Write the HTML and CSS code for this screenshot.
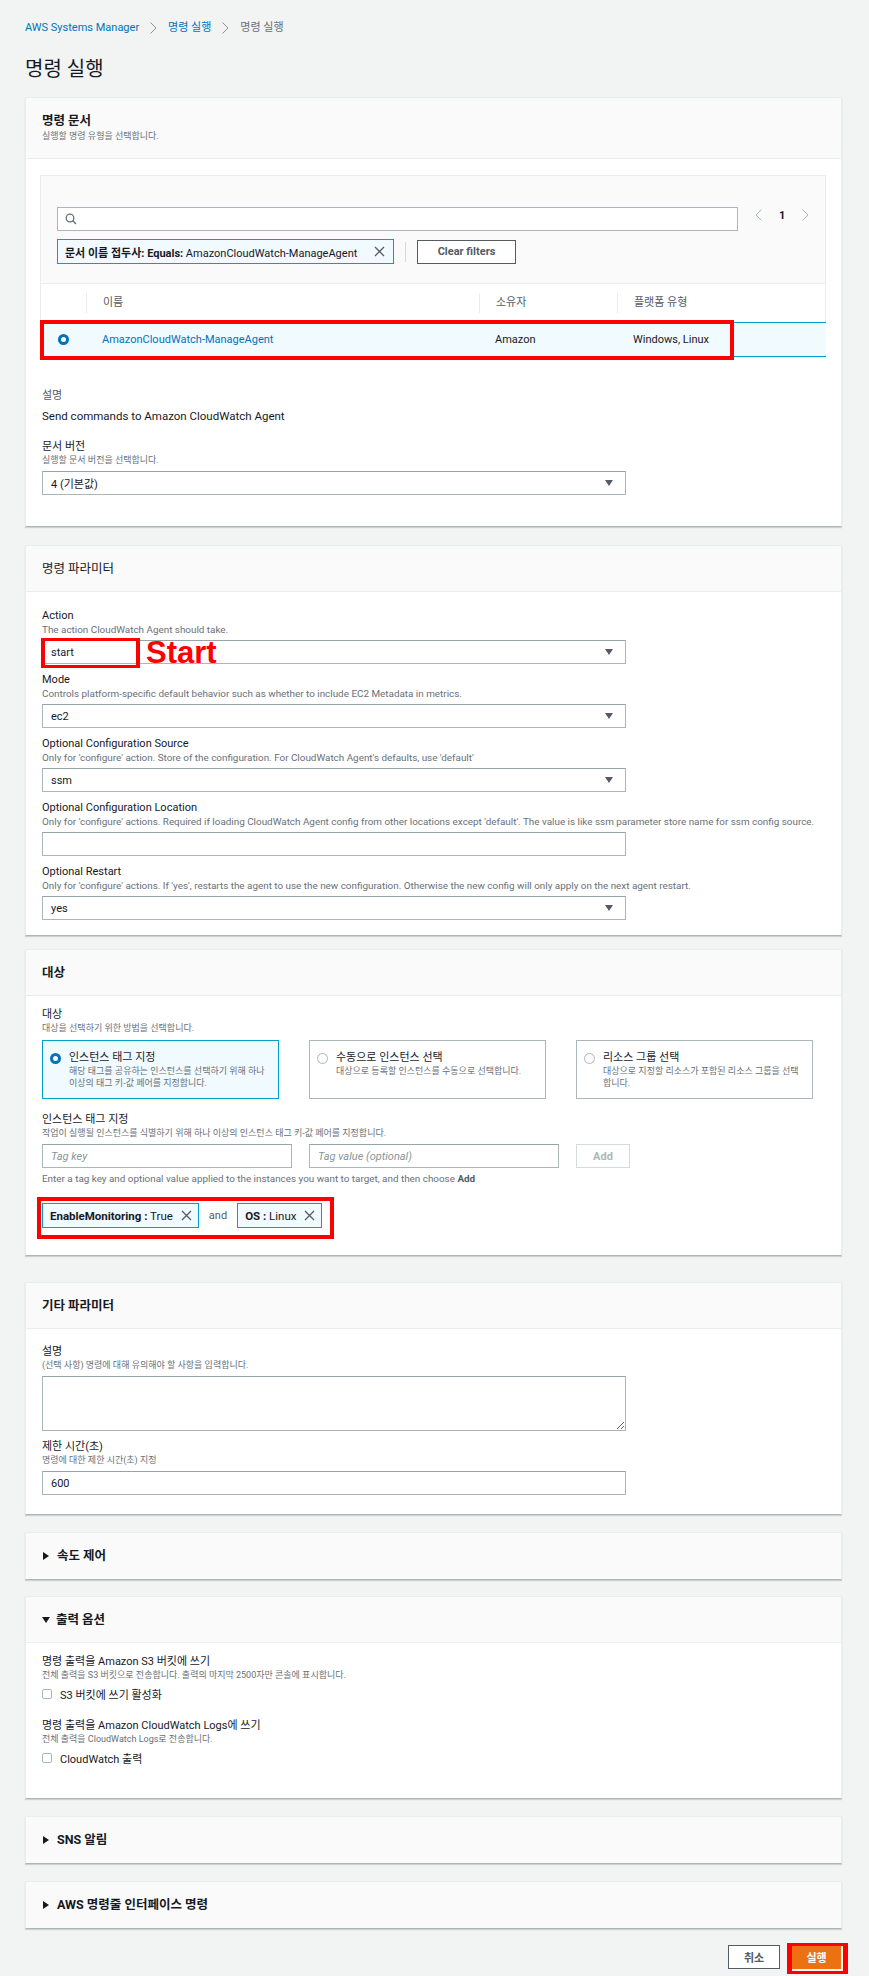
FILE: index.html
```html
<!DOCTYPE html>
<html lang="ko">
<head>
<meta charset="utf-8">
<title>명령 실행</title>
<link rel="stylesheet" href="styles.css">
</head>
<body>
<div class="page">
  <nav class="crumbs">
    <span class="crumb-link">AWS Systems Manager</span>
    <svg class="crumb-sep" viewBox="0 0 7 12"><path d="M0.5 0.5 L6 6 L0.5 11.5"/></svg>
    <span class="crumb-link">명령 실행</span>
    <svg class="crumb-sep" viewBox="0 0 7 12"><path d="M0.5 0.5 L6 6 L0.5 11.5"/></svg>
    <span class="crumb-current">명령 실행</span>
  </nav>
  <h1 class="page-title">명령 실행</h1>

  <div class="panels">
    <section class="panel">
      <header class="panel-head head-desc">
        <h2 class="panel-title">명령 문서</h2>
        <p class="panel-desc">실행할 명령 유형을 선택합니다.</p>
      </header>
      <div class="panel-body body-doc">
        <div class="table">
          <div class="filters">
            <div class="filter-top">
              <div class="search">
                <svg class="search-icon" viewBox="0 0 12 12"><circle cx="5" cy="5" r="3.8"/><path d="M7.8 7.8 L11 11"/></svg>
              </div>
              <div class="pager">
                <svg class="pager-chev" viewBox="0 0 7 12"><path d="M6.5 0.5 L1 6 L6.5 11.5"/></svg>
                <span class="pager-num">1</span>
                <svg class="pager-chev" viewBox="0 0 7 12"><path d="M0.5 0.5 L6 6 L0.5 11.5"/></svg>
              </div>
            </div>
            <div class="filter-bottom">
              <div class="chip">
                <span><b>문서 이름 접두사: Equals:</b> AmazonCloudWatch-ManageAgent</span>
                <svg class="x-icon" viewBox="0 0 11 11"><path d="M1 1 L10 10 M10 1 L1 10"/></svg>
              </div>
              <span class="vsep"></span>
              <span class="btn">Clear filters</span>
            </div>
          </div>
          <div class="thead">
            <div class="th"></div>
            <div class="th sep">이름</div>
            <div class="th sep">소유자</div>
            <div class="th sep">플랫폼 유형</div>
          </div>
          <div class="trow">
            <div class="td td-radio"><span class="radio on"></span></div>
            <div class="td"><span class="link">AmazonCloudWatch-ManageAgent</span></div>
            <div class="td">Amazon</div>
            <div class="td">Windows, Linux</div>
            <span class="mark mark-row"></span>
          </div>
        </div>

        <div class="kv">
          <div class="kv-label">설명</div>
          <div class="kv-value">Send commands to Amazon CloudWatch Agent</div>
        </div>

        <div class="field field-version">
          <div class="label">문서 버전</div>
          <div class="desc">실행할 문서 버전을 선택합니다.</div>
          <div class="control select"><span>4 (기본값)</span><svg class="caret" viewBox="0 0 8 6"><path d="M0 0 H8 L4 6 Z"/></svg></div>
        </div>
      </div>
    </section>

    <section class="panel gap-18">
      <header class="panel-head">
        <h2 class="panel-title light">명령 파라미터</h2>
      </header>
      <div class="panel-body body-params">
        <div class="field">
          <div class="label">Action</div>
          <div class="desc desc-en">The action CloudWatch Agent should take.</div>
          <div class="control select annotated">
            <span>start</span><svg class="caret" viewBox="0 0 8 6"><path d="M0 0 H8 L4 6 Z"/></svg>
            <span class="mark mark-action"></span>
            <span class="note">Start</span>
          </div>
        </div>
        <div class="field">
          <div class="label">Mode</div>
          <div class="desc desc-en">Controls platform-specific default behavior such as whether to include EC2 Metadata in metrics.</div>
          <div class="control select"><span>ec2</span><svg class="caret" viewBox="0 0 8 6"><path d="M0 0 H8 L4 6 Z"/></svg></div>
        </div>
        <div class="field">
          <div class="label">Optional Configuration Source</div>
          <div class="desc desc-en">Only for 'configure' action. Store of the configuration. For CloudWatch Agent's defaults, use 'default'</div>
          <div class="control select"><span>ssm</span><svg class="caret" viewBox="0 0 8 6"><path d="M0 0 H8 L4 6 Z"/></svg></div>
        </div>
        <div class="field">
          <div class="label">Optional Configuration Location</div>
          <div class="desc desc-en">Only for 'configure' actions. Required if loading CloudWatch Agent config from other locations except 'default'. The value is like ssm parameter store name for ssm config source.</div>
          <div class="control input"></div>
        </div>
        <div class="field">
          <div class="label">Optional Restart</div>
          <div class="desc desc-en">Only for 'configure' actions. If 'yes', restarts the agent to use the new configuration. Otherwise the new config will only apply on the next agent restart.</div>
          <div class="control select"><span>yes</span><svg class="caret" viewBox="0 0 8 6"><path d="M0 0 H8 L4 6 Z"/></svg></div>
        </div>
      </div>
    </section>

    <section class="panel gap-13">
      <header class="panel-head">
        <h2 class="panel-title">대상</h2>
      </header>
      <div class="panel-body body-target">
        <div class="label">대상</div>
        <div class="desc">대상을 선택하기 위한 방법을 선택합니다.</div>
        <div class="cards">
          <div class="card on">
            <span class="radio on"></span>
            <div class="card-text">
              <div class="card-title">인스턴스 태그 지정</div>
              <div class="card-desc">해당 태그를 공유하는 인스턴스를 선택하기 위해 하나<br>이상의 태그 키-값 페어를 지정합니다.</div>
            </div>
          </div>
          <div class="card">
            <span class="radio"></span>
            <div class="card-text">
              <div class="card-title">수동으로 인스턴스 선택</div>
              <div class="card-desc">대상으로 등록할 인스턴스를 수동으로 선택합니다.</div>
            </div>
          </div>
          <div class="card">
            <span class="radio"></span>
            <div class="card-text">
              <div class="card-title">리소스 그룹 선택</div>
              <div class="card-desc">대상으로 지정할 리소스가 포함된 리소스 그룹을 선택<br>합니다.</div>
            </div>
          </div>
        </div>

        <div class="label tag-label">인스턴스 태그 지정</div>
        <div class="desc">작업이 실행될 인스턴스를 식별하기 위해 하나 이상의 인스턴스 태그 키-값 페어를 지정합니다.</div>
        <div class="tag-inputs">
          <div class="control input tag-input"><span class="ph">Tag key</span></div>
          <div class="control input tag-input"><span class="ph">Tag value (optional)</span></div>
          <span class="btn btn-disabled">Add</span>
        </div>
        <div class="desc desc-en hint">Enter a tag key and optional value applied to the instances you want to target, and then choose <b>Add</b></div>
        <div class="tokens">
          <div class="token"><span><b>EnableMonitoring :</b> True</span><svg class="x-icon" viewBox="0 0 11 11"><path d="M1 1 L10 10 M10 1 L1 10"/></svg></div>
          <span class="and">and</span>
          <div class="token"><span><b>OS :</b> Linux</span><svg class="x-icon" viewBox="0 0 11 11"><path d="M1 1 L10 10 M10 1 L1 10"/></svg></div>
          <span class="mark mark-tokens"></span>
        </div>
      </div>
    </section>

    <section class="panel gap-27">
      <header class="panel-head">
        <h2 class="panel-title">기타 파라미터</h2>
      </header>
      <div class="panel-body body-other">
        <div class="field">
          <div class="label">설명</div>
          <div class="desc">(선택 사항) 명령에 대해 유의해야 할 사항을 입력합니다.</div>
          <textarea class="control textarea"></textarea>
        </div>
        <div class="field">
          <div class="label">제한 시간(초)</div>
          <div class="desc">명령에 대한 제한 시간(초) 지정</div>
          <div class="control input"><span>600</span></div>
        </div>
      </div>
    </section>

    <section class="panel gap-17">
      <header class="panel-head">
        <h2 class="panel-title"><svg class="tri" viewBox="0 0 6 8"><path d="M0 0 L6 4 L0 8 Z"/></svg>속도 제어</h2>
      </header>
    </section>

    <section class="panel gap-16">
      <header class="panel-head">
        <h2 class="panel-title"><svg class="tri tri-down" viewBox="0 0 8 6"><path d="M0 0 H8 L4 6 Z"/></svg>출력 옵션</h2>
      </header>
      <div class="panel-body body-output">
        <div class="label">명령 출력을 Amazon S3 버킷에 쓰기</div>
        <div class="desc">전체 출력을 S3 버킷으로 전송합니다. 출력의 마지막 2500자만 콘솔에 표시합니다.</div>
        <label class="check"><span class="box"></span>S3 버킷에 쓰기 활성화</label>
        <div class="label group2">명령 출력을 Amazon CloudWatch Logs에 쓰기</div>
        <div class="desc">전체 출력을 CloudWatch Logs로 전송합니다.</div>
        <label class="check"><span class="box"></span>CloudWatch 출력</label>
      </div>
    </section>

    <section class="panel gap-17">
      <header class="panel-head">
        <h2 class="panel-title"><svg class="tri" viewBox="0 0 6 8"><path d="M0 0 L6 4 L0 8 Z"/></svg>SNS 알림</h2>
      </header>
    </section>

    <section class="panel gap-17">
      <header class="panel-head">
        <h2 class="panel-title"><svg class="tri" viewBox="0 0 6 8"><path d="M0 0 L6 4 L0 8 Z"/></svg>AWS 명령줄 인터페이스 명령</h2>
      </header>
    </section>
  </div>

  <div class="actions">
    <span class="btn btn-cancel">취소</span>
    <span class="btn btn-run">실행<span class="mark mark-run"></span></span>
  </div>
</div>
</body>
</html>
```

FILE: styles.css
```css
* { box-sizing: border-box; }
html, body { margin: 0; padding: 0; }
body {
  background: #f2f3f3;
  font-family: Roboto, "Noto Sans CJK KR", sans-serif;
  color: #16191f;
  font-size: 11px;
}
b { font-weight: 700; }

.page { padding: 21px 27px 8px 25px; }

/* breadcrumbs */
.crumbs { display: flex; align-items: center; height: 14px; line-height: 14px; font-size: 11px; }
.crumb-link { color: #0073bb; }
.crumb-current { color: #687078; }
.crumb-sep { width: 7px; height: 12px; margin: 0 11px; fill: none; stroke: #879596; stroke-width: 1; }

.page-title { margin: 21px 0 15px; font-size: 20px; line-height: 26px; font-weight: 400; color: #16191f; }

/* panels */
.panels { display: flex; flex-direction: column; }
.panel {
  background: #fff;
  border: 1px solid #eaeded;
  border-bottom-color: #aab7b8;
  box-shadow: 0 1px 1px 0 rgba(0, 28, 36, 0.15);
}
.gap-18 { margin-top: 18px; }
.gap-13 { margin-top: 13px; }
.gap-27 { margin-top: 26px; }
.gap-17 { margin-top: 17px; }
.gap-16 { margin-top: 16px; }

.panel-head { background: #fafafa; padding: 14px 16px 13px; border-bottom: 1px solid #eaeded; }
.panel > .panel-head:last-child { border-bottom: 0; padding-bottom: 14px; }
.head-desc { padding-bottom: 15px; }
.panel-title { margin: 0; font-size: 12.5px; line-height: 18px; font-weight: 700; display: flex; align-items: center; }
.panel-title.light { font-weight: 400; }
.panel-desc { margin: 0; font-size: 9px; line-height: 13px; color: #687078; }
.tri { width: 6px; height: 8px; fill: #16191f; margin: 0 8px 0 1px; }
.tri-down { width: 8px; height: 6px; margin: 0 6px 0 0; }

.panel-body { padding: 17px 15px 15px 16px; }
.body-doc { padding: 16px 15px 31px 16px; }
.body-target { padding: 12px 15px 27px 16px; }
.body-other { padding: 16px 15px 19px 16px; }
.body-output { padding: 12px 15px 33px 16px; }

/* fields */
.label { font-size: 11px; line-height: 14px; color: #16191f; }
.desc { font-size: 9px; line-height: 13px; color: #687078; white-space: nowrap; }
.desc-en { font-size: 9.9px; }
.field + .field { margin-top: 9px; }
.control {
  margin-top: 4px;
  width: 584px;
  height: 24px;
  border: 1px solid #aab7b8;
  border-top-color: #95a5a6;
  background: #fff;
  display: flex;
  align-items: center;
  padding: 0 12px 0 8px;
  font-size: 11px;
  color: #16191f;
}
.select { justify-content: space-between; }
.caret { width: 8px; height: 6px; fill: #545b64; }
.textarea { display: block; height: 55px; resize: vertical; font-family: inherit; }
.ph { color: #879596; font-style: italic; }

.annotated { position: relative; }
.note {
  position: absolute;
  left: 103px;
  top: -2px;
  font-family: "Liberation Sans", Arial, sans-serif;
  font-weight: 700;
  font-size: 31px;
  line-height: 28px;
  color: #ff0000;
}

/* red annotation boxes */
.mark { position: absolute; border: 4px solid #ff0000; pointer-events: none; }
.mark-action { left: -2px; top: -3px; width: 99px; height: 30px; border-width: 3px 4px; }
.mark-row { left: -1px; top: -3px; width: 694px; height: 40px; }
.mark-tokens { left: -5px; top: -6px; width: 297px; height: 42px; }
.mark-run { left: -6px; top: -3px; width: 61px; height: 31px; border-width: 3px 5px; }

/* table */
.table { margin: 0 0 0 -2px; border: 1px solid #eaeded; }
.filters { background: #fafafa; padding: 31px 14px 19px 16px; border-bottom: 1px solid #eaeded; }
.filter-top { display: flex; align-items: center; }
.search { width: 681px; height: 24px; border: 1px solid #aab7b8; background: #fff; display: flex; align-items: center; padding-left: 7px; }
.search-icon { width: 12px; height: 12px; fill: none; stroke: #687078; stroke-width: 1.3; }
.pager { display: flex; align-items: center; gap: 17px; margin-left: 17px; margin-top: -8px; }
.pager-chev { width: 7px; height: 12px; fill: none; stroke: #aab7b8; stroke-width: 1; }
.pager-num { font-weight: 700; font-size: 11px; }
.filter-bottom { display: flex; align-items: center; margin-top: 8px; }
.chip {
  width: 337px; height: 25px;
  display: flex; align-items: center; justify-content: space-between;
  border: 1px solid #00a1c9; background: #f1faff;
  padding: 0 8px 0 7px; font-size: 11px; white-space: nowrap; overflow: hidden;
}
.x-icon { width: 11px; height: 11px; flex: none; fill: none; stroke: #545b64; stroke-width: 1.3; }
.vsep { width: 1px; height: 20px; background: #d5dbdb; margin: 0 11px; }
.btn {
  display: inline-flex; align-items: center; justify-content: center;
  height: 24px; border: 1px solid #545b64; background: #fff;
  font-weight: 700; font-size: 11px; color: #545b64;
}
.filter-bottom .btn { width: 99px; }

.thead, .trow { display: grid; grid-template-columns: 45px 393px 138px 1fr; }
.thead { height: 38px; background: #fff; align-items: center; }
.th { padding-left: 17px; color: #545b64; font-size: 11px; height: 20px; line-height: 20px; }
.th.sep { border-left: 1px solid #eaeded; padding-left: 16px; }
.trow {
  position: relative; height: 35px; align-items: center;
  background: #f1faff; border-top: 1px solid #00a1c9; border-bottom: 1px solid #00a1c9;
  margin-right: -1px;
}
.td { padding-left: 16px; font-size: 11px; }
.td-radio { padding-left: 0; display: flex; justify-content: center; }
.link { color: #0073bb; }

.radio { display: inline-block; width: 11px; height: 11px; border-radius: 50%; border: 1px solid #aab7b8; background: #fff; flex: none; }
.radio.on { border: 3.5px solid #0073bb; }

.kv { margin-top: 31px; }
.kv-label { font-size: 11px; line-height: 14px; color: #545b64; }
.kv-value { margin-top: 6px; font-size: 11.5px; line-height: 14px; }
.field-version { margin-top: 17px; }

/* target cards */
.cards { display: grid; grid-template-columns: repeat(3, 237px); gap: 30px; margin-top: 5px; }
.card { height: 59px; border: 1px solid #aab7b8; background: #fff; display: flex; align-items: flex-start; padding: 11px 8px 0 7px; }
.card.on { border-color: #00a1c9; background: #f1faff; }
.card .radio { margin-top: 1px; margin-right: 8px; }
.card-title { font-size: 11px; line-height: 13px; margin-top: -1px; }
.card-desc { font-size: 9px; line-height: 12px; color: #687078; margin-top: 1px; white-space: nowrap; }

.tag-label { margin-top: 14px; }
.tag-inputs { display: flex; gap: 17px; margin-top: 4px; }
.tag-inputs .control { margin-top: 0; }
.tag-input { width: 250px; }
.btn-disabled { width: 54px; border-color: #d5dbdb; color: #aab7b8; }
.hint { margin-top: 4px; }
.hint b { color: #545b64; }
.tokens { position: relative; display: flex; align-items: center; gap: 10px; margin-top: 18px; width: max-content; }
.token { height: 25px; display: flex; align-items: center; gap: 8px; border: 1px solid #00a1c9; background: #f1faff; padding: 0 6px 0 7px; font-size: 11.5px; white-space: nowrap; }
.and { font-size: 11px; color: #545b64; }

/* output options */
.check { display: flex; align-items: center; margin-top: 5px; height: 14px; font-size: 11px; }
.box { width: 10px; height: 10px; border: 1px solid #aab7b8; border-radius: 2px; background: #fff; margin-right: 8px; }
.group2 { margin-top: 18px; }

/* footer buttons */
.actions { display: flex; justify-content: flex-end; gap: 12px; margin-top: 16px; padding-right: 1px; }
.btn-cancel { width: 52px; color: #545b64; }
.btn-run { position: relative; width: 49px; background: #ec7211; border-color: #ec7211; color: #fff; }
```
